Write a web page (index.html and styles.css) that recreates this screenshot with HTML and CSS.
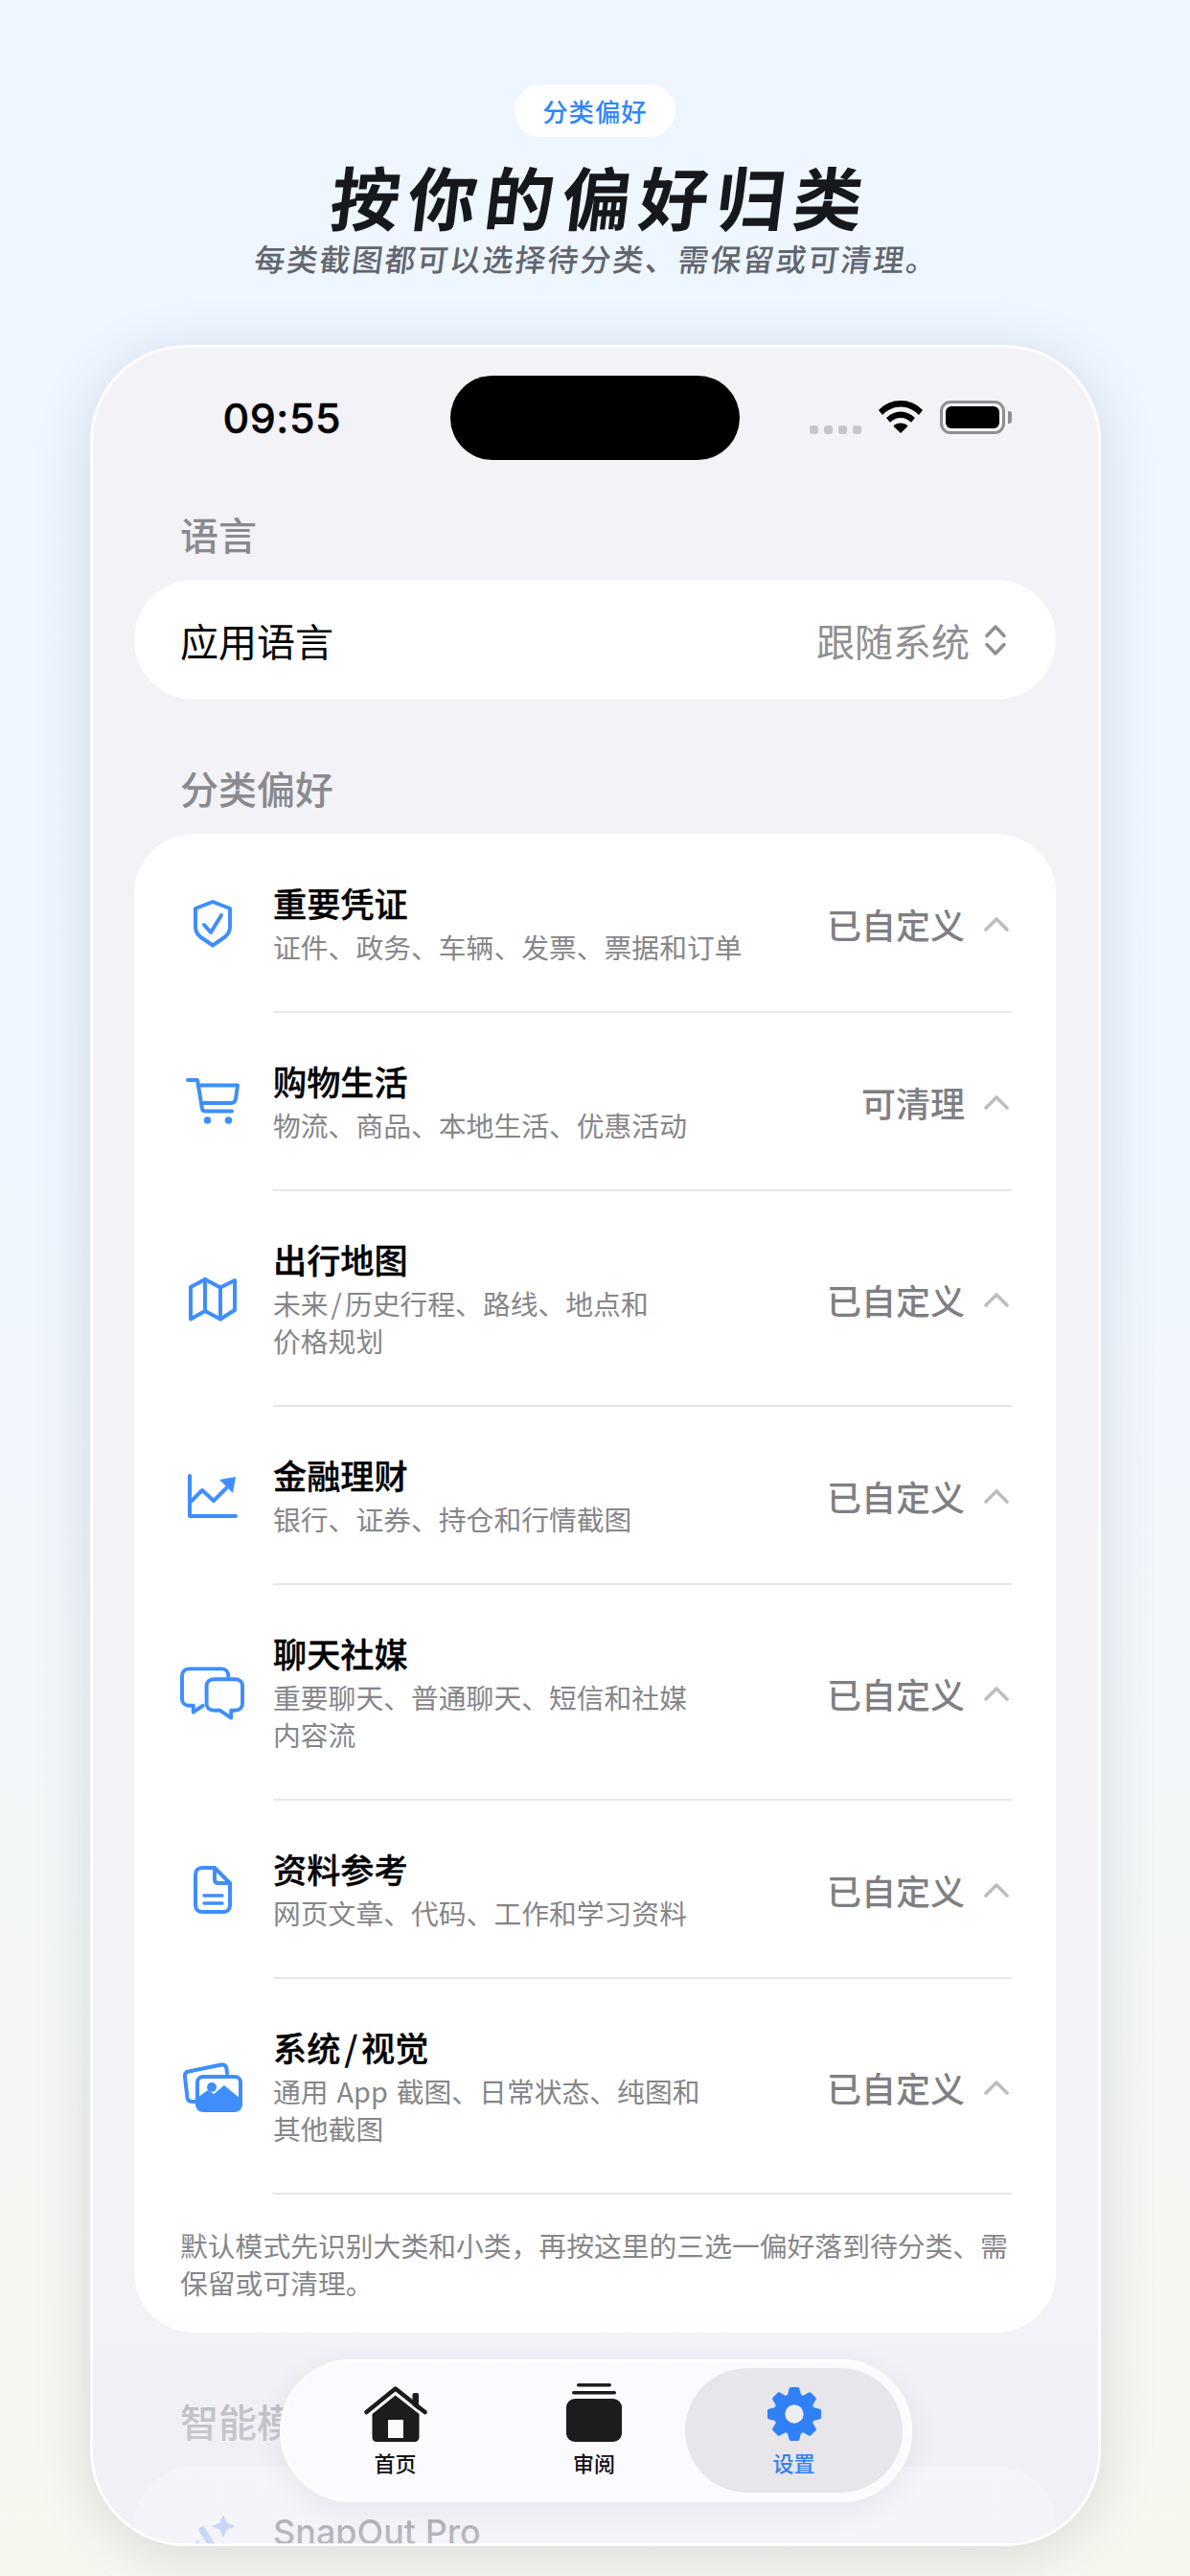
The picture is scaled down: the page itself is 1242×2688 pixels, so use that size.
FILE: index.html
```html
<!DOCTYPE html>
<html lang="zh-CN">
<head>
<meta charset="utf-8">
<title>分类偏好</title>
<link rel="stylesheet" href="styles.css">
</head>
<body>
<header class="hero">
  <div class="pill">分类偏好</div>
  <h1 class="hero-title">按你的偏好归类</h1>
  <p class="hero-sub">每类截图都可以选择待分类、需保留或可清理。</p>
</header>

<main class="phone">
  <div class="status">
    <span class="time">09:55</span>
    <span class="island"></span>
    <span class="status-right">
      <span class="dots"><i></i><i></i><i></i><i></i></span>
      <svg class="wifi" width="46" height="34" viewBox="0 0 46 34"><path d="M23 0C14 0 6.500 3.300 0 10l4 5C9.500 9.500 16 6.500 23 6.500S36.500 9.500 42 15l4-5C39.500 3.300 32 0 23 0z"/><path d="M23 11.500c-5.500 0-10.500 2.200-15 6.500l4 4.800c3.200-3 6.800-4.800 11-4.800s7.800 1.800 11 4.800l4-4.800c-4.500-4.300-9.500-6.500-15-6.500z"/><path d="M23 23.500c-3 0-5.700 1.200-7.500 3.200L23 34l7.500-7.300c-1.800-2-4.500-3.200-7.500-3.200z"/></svg>
      <span class="battery"><span class="battery-fill"></span></span>
    </span>
  </div>

  <div class="content">
    <h2 class="label">语言</h2>
    <section class="card lang">
      <span class="lang-name">应用语言</span>
      <span class="lang-value">跟随系统
        <svg width="22" height="32" viewBox="0 0 22 32" fill="none" stroke="#8e8e93" stroke-width="3.400" stroke-linecap="round" stroke-linejoin="round"><path d="M2 11.500 11 2l9 9.500M2 20.500l9 9.500 9-9.500"/></svg>
      </span>
    </section>

    <h2 class="label">分类偏好</h2>
    <section class="card prefs">
      <div class="row">
        <span class="icon"><svg width="42" height="50" viewBox="0 0 42 50" fill="none" stroke="#3f8efc" stroke-width="4" stroke-linejoin="round" stroke-linecap="round"><path d="M21 2 39 9v19c0 4-1.500 7.500-5 10.500L21 47.500 8 38.500C4.500 35.500 3 32 3 28V9z"/><path d="m12 26 7 8 11-18"/></svg></span>
        <div class="main"><div class="txt"><div class="t">重要凭证</div><div class="s">证件、政务、车辆、发票、票据和订单</div></div>
          <span class="v">已自定义</span><svg class="chev" width="26" height="16" viewBox="0 0 26 16" fill="none" stroke="#bdbdc1" stroke-width="3.600" stroke-linecap="round" stroke-linejoin="round"><path d="M2 14 13 3l11 11"/></svg></div>
      </div>
      <div class="row">
        <span class="icon"><svg width="56" height="50" viewBox="0 0 56 50" fill="none" stroke="#3f8efc" stroke-width="4" stroke-linecap="round" stroke-linejoin="round"><path d="M2 2h10l5 30c.3 1.500 1.300 2.500 3 2.500h28"/><path d="M13 7.500h41l-2 14c-.5 3-2 4.500-5 4.500H16"/><circle cx="22.500" cy="44" r="3.800" fill="#3f8efc" stroke="none"/><circle cx="44.500" cy="44" r="3.800" fill="#3f8efc" stroke="none"/></svg></span>
        <div class="main"><div class="txt"><div class="t">购物生活</div><div class="s">物流、商品、本地生活、优惠活动</div></div>
          <span class="v">可清理</span><svg class="chev" width="26" height="16" viewBox="0 0 26 16" fill="none" stroke="#bdbdc1" stroke-width="3.600" stroke-linecap="round" stroke-linejoin="round"><path d="M2 14 13 3l11 11"/></svg></div>
      </div>
      <div class="row">
        <span class="icon"><svg width="50" height="46" viewBox="0 0 50 46" fill="none" stroke="#3f8efc" stroke-width="4" stroke-linecap="round" stroke-linejoin="round"><path d="M2 10 17 2l16 8.500L48 3v31l-15 9.500L17 35 2 43.500z"/><path d="M17 2v33M33 10.500v33"/></svg></span>
        <div class="main"><div class="txt"><div class="t">出行地图</div><div class="s">未来<span class="slash">/</span>历史行程、路线、地点和<br>价格规划</div></div>
          <span class="v">已自定义</span><svg class="chev" width="26" height="16" viewBox="0 0 26 16" fill="none" stroke="#bdbdc1" stroke-width="3.600" stroke-linecap="round" stroke-linejoin="round"><path d="M2 14 13 3l11 11"/></svg></div>
      </div>
      <div class="row">
        <span class="icon"><svg width="52" height="46" viewBox="0 0 52 46" fill="none"><path d="M2 2v42h48" stroke="#3f8efc" stroke-width="4" stroke-linecap="round" stroke-linejoin="round"/><path d="M3 29 15 17l12 11 14-14" stroke="#3f8efc" stroke-width="4" stroke-linejoin="round"/><path d="M33 6 50 3l-3 17z" fill="#3f8efc"/></svg></span>
        <div class="main"><div class="txt"><div class="t">金融理财</div><div class="s">银行、证券、持仓和行情截图</div></div>
          <span class="v">已自定义</span><svg class="chev" width="26" height="16" viewBox="0 0 26 16" fill="none" stroke="#bdbdc1" stroke-width="3.600" stroke-linecap="round" stroke-linejoin="round"><path d="M2 14 13 3l11 11"/></svg></div>
      </div>
      <div class="row">
        <span class="icon"><svg width="68" height="56" viewBox="0 0 68 56" fill="none" stroke="#3f8efc" stroke-width="4" stroke-linecap="round" stroke-linejoin="round"><path d="M51 11V9c0-4-3-7-7-7H10C5 2 2 5 2 10v24c0 4 3 6.500 7 7h5v7l10-7"/><path d="M36 13h22c5 0 8 3 8 7v19c0 4-3 7-8 7h-4v8l-12-8H36c-5 0-8-3-8-7V20c0-4 3-7 8-7z"/></svg></span>
        <div class="main"><div class="txt"><div class="t">聊天社媒</div><div class="s">重要聊天、普通聊天、短信和社媒<br>内容流</div></div>
          <span class="v">已自定义</span><svg class="chev" width="26" height="16" viewBox="0 0 26 16" fill="none" stroke="#bdbdc1" stroke-width="3.600" stroke-linecap="round" stroke-linejoin="round"><path d="M2 14 13 3l11 11"/></svg></div>
      </div>
      <div class="row">
        <span class="icon"><svg width="40" height="50" viewBox="0 0 40 50" fill="none" stroke="#3f8efc" stroke-width="4" stroke-linecap="round" stroke-linejoin="round"><path d="M22 2H9C5 2 2 5 2 9v32c0 4 3 7 7 7h22c4 0 7-3 7-7V18z"/><path d="M22 2v12c0 2.500 1.500 4 4 4h12"/><path d="M11 31h19M11 39h19" stroke-width="3.400"/></svg></span>
        <div class="main"><div class="txt"><div class="t">资料参考</div><div class="s">网页文章、代码、工作和学习资料</div></div>
          <span class="v">已自定义</span><svg class="chev" width="26" height="16" viewBox="0 0 26 16" fill="none" stroke="#bdbdc1" stroke-width="3.600" stroke-linecap="round" stroke-linejoin="round"><path d="M2 14 13 3l11 11"/></svg></div>
      </div>
      <div class="row">
        <span class="icon"><svg width="62" height="52" viewBox="0 0 62 52" fill="none"><path d="M14 41H10c-3 .2-5-1-5.500-4L2 15c-.4-3 1-5 4-5.500L40 2.500c3-.4 5 1 5.500 4l.5 5" stroke="#3f8efc" stroke-width="4" stroke-linecap="round" stroke-linejoin="round"/><rect x="15" y="15" width="45" height="35" rx="6" fill="#fff" stroke="#3f8efc" stroke-width="4"/><path d="M13.500 38 26 29l6 4 11-9 17 14v6c0 4-2 7-7 7H20c-4 0-6.500-3-6.500-7z" fill="#3f8efc"/><circle cx="30" cy="26" r="5" fill="#3f8efc"/></svg></span>
        <div class="main"><div class="txt"><div class="t">系统<span class="slash-t">/</span>视觉</div><div class="s">通用 App 截图、日常状态、纯图和<br>其他截图</div></div>
          <span class="v">已自定义</span><svg class="chev" width="26" height="16" viewBox="0 0 26 16" fill="none" stroke="#bdbdc1" stroke-width="3.600" stroke-linecap="round" stroke-linejoin="round"><path d="M2 14 13 3l11 11"/></svg></div>
      </div>
      <p class="note">默认模式先识别大类和小类，再按这里的三选一偏好落到待分类、需保留或可清理。</p>
    </section>

    <h2 class="label">智能模式</h2>
    <section class="card pro">
      <span class="icon pro-icon"><svg width="46" height="50" viewBox="0 0 46 50" fill="none"><path d="M12 16 34 50" stroke="#3f8efc" stroke-width="7" stroke-linecap="round"/><path d="M34 0l3.500 8.500L46 12l-8.500 3.500L34 24l-3.500-8.500L22 12l8.500-3.500z" fill="#3f8efc"/><path d="M7 26l2 5 5 2-5 2-2 5-2-5-5-2 5-2z" fill="#3f8efc"/></svg></span>
      <span class="pro-name">SnapOut Pro</span>
    </section>
  </div>

  <div class="fade"></div>

  <nav class="tabs">
    <div class="tab">
      <svg class="tab-icon" width="66" height="58" viewBox="0 0 66 58"><path d="M2.500 27 32.700 2.500 63.500 27" fill="none" stroke="#1c1c1e" stroke-width="4.500" stroke-linecap="round" stroke-linejoin="round"/><path d="M50.500 9c0-1 .7-2 2-2h2.800c1 0 1.700 1 1.700 2v16l-6.500-5z" fill="#1c1c1e"/><path d="M32.700 9.500 8.500 29v24c0 3 2 5 5 5h39c3 0 5-2 5-5V29zM25 35h16v19H25z" fill="#1c1c1e" fill-rule="evenodd"/></svg>
      <span class="tab-label">首页</span>
    </div>
    <div class="tab">
      <svg class="tab-icon" width="58" height="61" viewBox="0 0 58 61" fill="#1c1c1e"><rect x="11" y="0" width="36" height="3.500" rx="1.700"/><rect x="6" y="8" width="46" height="3.500" rx="1.700"/><rect x="0" y="16" width="58" height="45" rx="9"/></svg>
      <span class="tab-label">审阅</span>
    </div>
    <div class="tab tab-active">
      <svg class="tab-icon" width="60" height="58" viewBox="0 0 60 60">
        <g fill="#3080f6"><circle cx="30" cy="30" r="22"/>
          <path d="M22 12 24.500 2.500C25 1.300 25.800 1 27 1h6c1.200 0 2 .3 2.500 1.500L38 12z"/>
          <path transform="rotate(45 30 30)" d="M22 12 24.500 2.500C25 1.300 25.800 1 27 1h6c1.200 0 2 .3 2.500 1.500L38 12z"/>
          <path transform="rotate(90 30 30)" d="M22 12 24.500 2.500C25 1.300 25.800 1 27 1h6c1.200 0 2 .3 2.500 1.500L38 12z"/>
          <path transform="rotate(135 30 30)" d="M22 12 24.500 2.500C25 1.300 25.800 1 27 1h6c1.200 0 2 .3 2.500 1.500L38 12z"/>
          <path transform="rotate(180 30 30)" d="M22 12 24.500 2.500C25 1.300 25.800 1 27 1h6c1.200 0 2 .3 2.500 1.500L38 12z"/>
          <path transform="rotate(225 30 30)" d="M22 12 24.500 2.500C25 1.300 25.800 1 27 1h6c1.200 0 2 .3 2.500 1.500L38 12z"/>
          <path transform="rotate(270 30 30)" d="M22 12 24.500 2.500C25 1.300 25.800 1 27 1h6c1.200 0 2 .3 2.500 1.500L38 12z"/>
          <path transform="rotate(315 30 30)" d="M22 12 24.500 2.500C25 1.300 25.800 1 27 1h6c1.200 0 2 .3 2.500 1.500L38 12z"/>
        </g>
        <circle cx="30" cy="30" r="10" fill="#eeeef2"/>
      </svg>
      <span class="tab-label tab-label-active">设置</span>
    </div>
  </nav>
</main>
</body>
</html>
```

FILE: styles.css
```css
* { box-sizing: border-box; }
html, body { margin: 0; height: 2688px; overflow: hidden; }
body {
  width: 1242px;
  background: linear-gradient(180deg, #eef6ff 0%, #eff6ff 45%, #f8f7ef 100%);
  font-family: "Noto Sans CJK SC", "Noto Sans", sans-serif;
  display: flex;
  flex-direction: column;
  align-items: center;
}
.hero {
  height: 360px;
  padding-top: 88px;
  display: flex;
  flex-direction: column;
  align-items: center;
}
.pill {
  width: 168px;
  height: 55px;
  border-radius: 28px;
  background: #fff;
  color: #2f86f8;
  font-size: 26.4px;
  line-height: 55px;
  text-align: center;
  font-weight: 500;
  letter-spacing: 1px;
}
.hero-title {
  margin: 17px 0 0;
  font-size: 72px;
  line-height: 88px;
  font-weight: 700;
  letter-spacing: 8.500px;
  color: #16181c;
  transform: translateX(7px) skewX(-7deg);
}
.hero-sub {
  margin: 0;
  font-size: 32px;
  line-height: 42px;
  font-weight: 500;
  letter-spacing: 2px;
  color: #62666f;
  transform: translateX(2px) skewX(-7deg);
}
.phone {
  position: relative;
  width: 1055px;
  height: 2297px;
  border: 3px solid #fff;
  border-radius: 100px;
  background: #f2f2f7;
  overflow: hidden;
  flex: none;
  box-shadow: 0 10px 60px rgba(50, 70, 100, 0.16);
}
.status {
  height: 167px;
  padding: 29px 97px 0 136px;
  display: flex;
  align-items: flex-start;
  justify-content: space-between;
}
.time {
  margin-top: 16px;
  font-family: "Inter", "Liberation Sans", sans-serif;
  font-size: 43px;
  line-height: 56px;
  font-weight: 500;
  letter-spacing: 0.5px;
  -webkit-text-stroke: 0.4px #000;
  color: #000;
}
.island {
  position: absolute;
  left: 373.500px;
  top: 29px;
  width: 302px;
  height: 88px;
  border-radius: 44px;
  background: #000;
}
.status-right {
  display: flex;
  align-items: flex-start;
  gap: 18px;
  padding-top: 26px;
}
.dots { display: flex; gap: 6px; margin-top: 26px; }
.dots i { width: 9px; height: 9px; border-radius: 3px; background: #c5c5ca; }
.wifi { display: block; fill: #000; }
.battery {
  position: relative;
  width: 68px;
  height: 35px;
  border: 3px solid #8e8e93;
  border-radius: 11px;
  padding: 3px;
}
.battery::after {
  content: "";
  position: absolute;
  right: -10px;
  top: 8px;
  width: 4px;
  height: 13px;
  border-radius: 0 3px 3px 0;
  background: #8e8e93;
}
.battery-fill { display: block; height: 100%; background: #000; border-radius: 6px; }
.content { padding: 0 43.500px; }
.label {
  margin: 0 0 19px;
  padding-left: 48px;
  padding-bottom: 2px;
  font-size: 40px;
  line-height: 54px;
  font-weight: 500;
  color: #8a8a8e;
}
.card {
  background: #fff;
  border-radius: 62px;
  margin-bottom: 65px;
  padding: 0 46px 0 48px;
}
.lang {
  height: 125px;
  padding-right: 52px;
  display: flex;
  align-items: center;
  justify-content: space-between;
}
.lang-name { font-size: 40px; color: #000; }
.lang-value {
  display: flex;
  align-items: center;
  gap: 16px;
  font-size: 40px;
  color: #8e8e93;
}
.prefs { padding-top: 1px; padding-bottom: 33px; }
.row { display: flex; align-items: stretch; }
.icon {
  flex: none;
  width: 67px;
  margin-right: 30px;
  display: flex;
  align-items: center;
  justify-content: center;
}
.main {
  flex: 1;
  display: flex;
  align-items: center;
  padding: 50px 3px 48px 0;
  border-bottom: 2px solid #e6e6e9;
}
.txt { flex: 1; }
.t {
  font-size: 35.2px;
  line-height: 42px;
  margin-bottom: 5px;
  font-weight: 500;
  -webkit-text-stroke: 0.35px #000;
  color: #000;
}
.s { font-size: 28.8px; line-height: 39px; color: #86868a; white-space: nowrap; word-spacing: 2.500px; }
.slash { margin: 0 3px; }
.slash-t { margin: 0 4px; }
.v { font-size: 36px; font-weight: 500; color: #7f7f83; }
.chev { margin-left: 20px; flex: none; }
.note { margin: 33px 0 0; font-size: 28.8px; line-height: 39px; color: #86868a; }
.pro { display: flex; align-items: flex-start; height: 180px; padding-top: 45px; }
.pro-icon { margin-top: 5px; }
.pro-name { font-family: "Inter", sans-serif; font-size: 36px; line-height: 46px; font-weight: 500; color: #000; }
.fade {
  position: absolute;
  left: 0;
  right: 0;
  bottom: 0;
  height: 247px;
  background: linear-gradient(180deg, rgba(240, 240, 246, 0) 0%, rgba(238, 238, 244, 0.56) 45%, rgba(240, 240, 247, 0.78) 100%);
}
.tabs {
  position: absolute;
  left: 195px;
  bottom: 43px;
  width: 660px;
  height: 149px;
  border: 3px solid #fff;
  border-radius: 75px;
  background: #fbfbff;
  padding: 6px 8px 7px 5.500px;
  display: grid;
  grid-template-columns: 225px 190px 227px;
  box-shadow: 0 8px 30px rgba(60, 70, 90, 0.08);
}
.tab {
  display: flex;
  flex-direction: column;
  align-items: center;
  justify-content: flex-end;
  padding-bottom: 17px;
  gap: 6px;
}
.tab-icon { display: block; }
.tab-active { background: #e6e6eb; border-radius: 65px; }
.tab-label { font-size: 22px; line-height: 30px; font-weight: 500; color: #111; }
.tab-label-active { color: #3080f6; }
```
